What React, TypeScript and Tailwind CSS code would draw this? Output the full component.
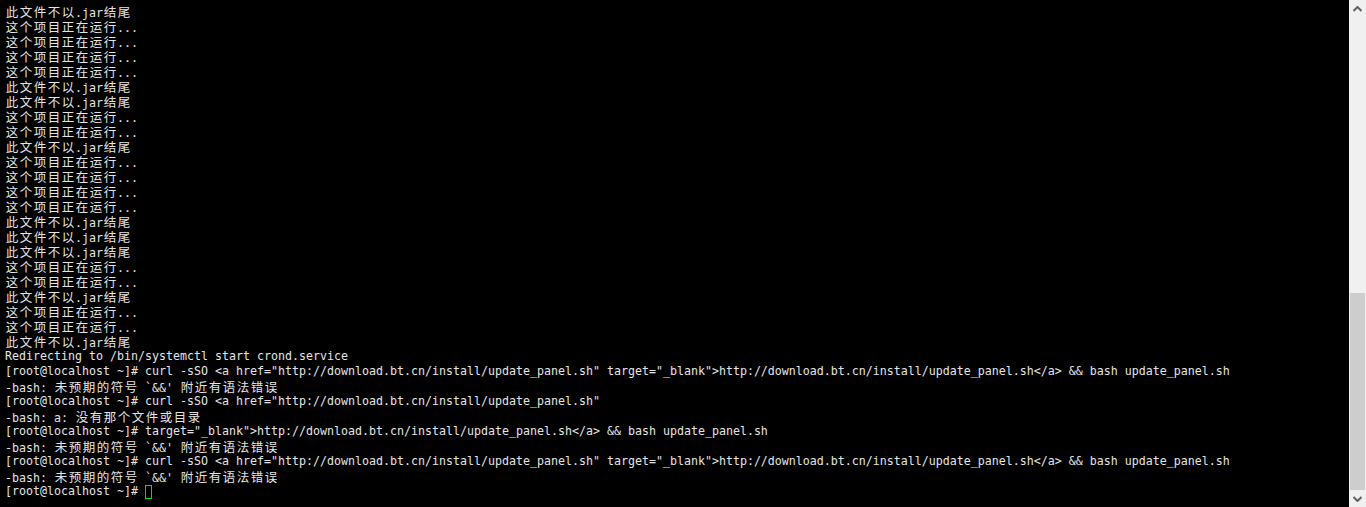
const jarLine = '此文件不以.jar结尾';
const runLine = '这个项目正在运行...';
const fullCurl =
  '[root@localhost ~]# curl -sSO <a href="http://download.bt.cn/install/update_panel.sh" target="_blank">http://download.bt.cn/install/update_panel.sh</a> && bash update_panel.sh';
const syntaxErr = "-bash: 未预期的符号 `&&' 附近有语法错误";

const lines: string[] = [
  jarLine,
  runLine,
  runLine,
  runLine,
  runLine,
  jarLine,
  jarLine,
  runLine,
  runLine,
  jarLine,
  runLine,
  runLine,
  runLine,
  runLine,
  jarLine,
  jarLine,
  jarLine,
  runLine,
  runLine,
  jarLine,
  runLine,
  runLine,
  jarLine,
  'Redirecting to /bin/systemctl start crond.service',
  fullCurl,
  syntaxErr,
  '[root@localhost ~]# curl -sSO <a href="http://download.bt.cn/install/update_panel.sh"',
  '-bash: a: 没有那个文件或目录',
  '[root@localhost ~]# target="_blank">http://download.bt.cn/install/update_panel.sh</a> && bash update_panel.sh',
  syntaxErr,
  fullCurl,
  syntaxErr,
];

// wide chars take two terminal cells
function TermText({ text }: { text: string }) {
  const parts: { wide: boolean; s: string }[] = [];
  for (const ch of text) {
    const wide = /[\u3000-\u9fff\uff00-\uffef]/.test(ch);
    const last = parts[parts.length - 1];
    if (!wide && last && !last.wide) last.s += ch;
    else parts.push({ wide, s: ch });
  }
  return (
    <>
      {parts.map((p, i) =>
        p.wide ? (
          <span
            key={i}
            className="inline-block w-[14px] text-center font-['Noto_Sans_CJK_SC',sans-serif] text-[12.5px]"
          >
            {p.s}
          </span>
        ) : (
          <span key={i}>{p.s}</span>
        )
      )}
    </>
  );
}

function Arrow({ up }: { up?: boolean }) {
  return (
    <div className="flex h-[17px] items-center justify-center">
      <svg width="9" height="6" viewBox="0 0 9 6">
        <path
          d={up ? 'M0.5 5 L4.5 1 L8.5 5' : 'M0.5 1 L4.5 5 L8.5 1'}
          fill="none"
          stroke="#606060"
          strokeWidth="2"
        />
      </svg>
    </div>
  );
}

export default function App() {
  return (
    <div className="flex h-[507px] w-full overflow-hidden bg-black">
      <div className="flex-1 pl-[5px] pt-[4px] font-['DejaVu_Sans_Mono',monospace] text-[11.63px] leading-[15px] text-[#e4e4e4] whitespace-pre">
        {lines.map((line, i) => (
          <div key={i} className="h-[15px]">
            <TermText text={line} />
          </div>
        ))}
        <div className="flex h-[15px] items-center">
          <span>[root@localhost ~]# </span>
          <span className="inline-block h-[14px] w-[7px] border border-[#00e600]" />
        </div>
      </div>

      <div className="flex w-[17px] flex-col bg-[#f0f0f0]">
        <Arrow up />
        <div className="flex-1" />
        <div className="mx-[1px] h-[197px] bg-[#cdcdcd]" />
        <Arrow />
      </div>
    </div>
  );
}
